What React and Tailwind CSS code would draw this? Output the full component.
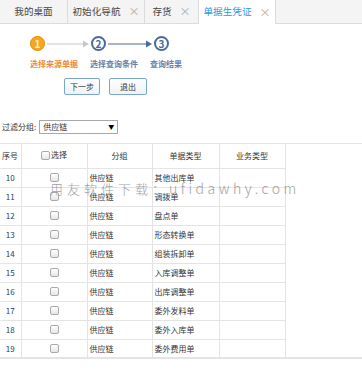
import React from 'react';

const rows = [
    ['10', '其他出库单'],
    ['11', '调拨单'],
    ['12', '盘点单'],
    ['13', '形态转换单'],
    ['14', '组装拆卸单'],
    ['15', '入库调整单'],
    ['16', '出库调整单'],
    ['17', '委外发料单'],
    ['18', '委外入库单'],
    ['19', '委外费用单'],
];

function Tab({ label, close, w }) {
    return (
        <div
            className="h-[24px] flex items-center justify-center gap-[8px] border-r border-b border-[#dcdcdc] bg-[#f4f4f4] text-[#444]"
            style={{ width: w }}
        >
            <span>{label}</span>
            {close && <span className="text-[#aaa] text-[11px]">×</span>}
        </div>
    );
}

function Circle({ n, active }) {
    return (
        <div
            className={
                'w-[15px] h-[15px] rounded-full flex items-center justify-center text-[10px] font-bold leading-none ' +
                (active
                    ? 'bg-[#f6a623] border border-[#e08a00] text-[#fff3c0]'
                    : 'bg-white border-2 border-[#4a6aa0] text-[#4a6aa0]')
            }
        >
            {n}
        </div>
    );
}

function Arrow({ color, w }) {
    return (
        <svg width={w} height="8" viewBox={`0 0 ${w} 8`} className="mx-[2px]">
            <line x1="0" y1="4" x2={w - 5} y2="4" stroke={color} strokeWidth="1.2" />
            <polygon points={`${w - 6},0.5 ${w},4 ${w - 6},7.5`} fill={color} />
        </svg>
    );
}

function Check() {
    return <span className="inline-block w-[9px] h-[9px] rounded-[2px] border border-[#aaa] bg-gradient-to-b from-white to-[#e6e6e6] align-middle" />;
}

const cell = 'border-r border-b border-[#e4e4e4]';

export default function App() {
    return (
        <div
            className="relative w-[362px] h-[379px] bg-white overflow-hidden text-[8px] leading-none text-[#333]"
            style={{ fontFamily: '"Noto Sans CJK SC", "Noto Sans", sans-serif' }}
        >
            {/* Tabs */}
            <div className="flex h-[24px] bg-[#f4f4f4] text-[9.6px]">
                <Tab label="我的桌面" w={68} />
                <Tab label="初始化导航" close w={77} />
                <Tab label="存货" close w={54} />
                <div className="h-[24px] w-[77px] bg-white border-r border-[#dcdcdc] flex items-center justify-center gap-[8px] text-[#2b9be0]">
                    <span>单据生凭证</span>
                    <span className="text-[#aaa] text-[11px]">×</span>
                </div>
                <div className="flex-1 h-[24px] border-b border-[#dcdcdc]" />
            </div>

            {/* Steps */}
            <div className="flex items-center pl-[30px] pt-[12px]">
                <Circle n="1" active />
                <Arrow color="#c8c8c8" w={42} />
                <Circle n="2" />
                <Arrow color="#4a6aa0" w={44} />
                <Circle n="3" />
            </div>
            <div className="flex pl-[30px] mt-[9px] font-bold">
                <span className="text-[#ee8a33] w-[60px]">选择来源单据</span>
                <span className="text-[#6a80a8] w-[60px]">选择查询条件</span>
                <span className="text-[#6a80a8]">查询结果</span>
            </div>
            <div className="flex gap-[9px] pl-[64px] mt-[10px]">
                <button className="w-[36px] h-[17px] text-[8px] leading-none border border-[#7aa7c7] rounded-[2px] bg-gradient-to-b from-white to-[#eef3f7]">下一步</button>
                <button className="w-[38px] h-[17px] text-[8px] leading-none border border-[#7aa7c7] rounded-[2px] bg-gradient-to-b from-white to-[#eef3f7]">退出</button>
            </div>

            {/* Filter */}
            <div className="flex items-center pl-[2px] mt-[25px]">
                <span>过滤分组:</span>
                <div className="ml-[3px] w-[79px] h-[14px] border border-[#a9a9a9] flex items-center justify-between px-[3px]">
                    <span>供应链</span>
                    <span className="text-[6px] text-black">▼</span>
                </div>
            </div>

            {/* Grid */}
            <div className="mt-[9px] border-t border-b-2 border-[#e4e4e4] h-[216px] overflow-hidden">
                <table className="w-[285px] border-collapse table-fixed">
                    <colgroup>
                        <col className="w-[21px]" />
                        <col className="w-[66px]" />
                        <col className="w-[65px]" />
                        <col className="w-[67px]" />
                        <col className="w-[66px]" />
                    </colgroup>
                    <thead>
                        <tr className="h-[24px]">
                            <th className={'font-normal text-left pl-[2px] ' + cell}>序号</th>
                            <th className={'font-normal ' + cell}>
                                <span className="inline-flex items-center gap-[1px]"><Check />选择</span>
                            </th>
                            <th className={'font-normal ' + cell}>分组</th>
                            <th className={'font-normal ' + cell}>单据类型</th>
                            <th className={'font-normal ' + cell}>业务类型</th>
                        </tr>
                    </thead>
                    <tbody>
                        {rows.map(([n, t]) => (
                            <tr key={n} className="h-[19px]">
                                <td className={'text-center text-[#1f3a6a] ' + cell}>{n}</td>
                                <td className={'text-center ' + cell}><Check /></td>
                                <td className={'pl-[2px] ' + cell}>供应链</td>
                                <td className={'pl-[2px] whitespace-nowrap overflow-hidden ' + cell}>{t}</td>
                                <td className={cell}></td>
                            </tr>
                        ))}
                    </tbody>
                </table>
            </div>

            {/* Watermark */}
            <div
                className="absolute left-[50px] top-[181px] flex items-baseline leading-none text-[#8a8a8a] opacity-80 whitespace-nowrap pointer-events-none"
                style={{ fontFamily: '"Noto Sans CJK SC", "DejaVu Sans", sans-serif', fontWeight: 200 }}
            >
                <span className="text-[13px] tracking-[4px]">用友软件下载：</span>
                <span className="text-[14px] tracking-[3.5px]">ufidawhy.com</span>
            </div>
        </div>
    );
}
